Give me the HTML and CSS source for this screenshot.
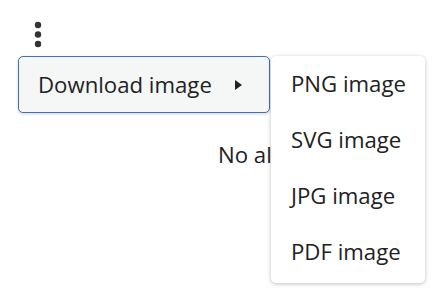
FILE: index.html
```html
<!DOCTYPE html>
<html>
<head>
<meta charset="utf-8">
<link rel="stylesheet" href="styles.css">
</head>
<body>
<div class="page">
  <div class="kebab">
    <svg width="8" height="27" viewBox="0 0 8 27">
      <circle cx="4" cy="4" r="3.2"/>
      <circle cx="4" cy="13.5" r="3.2"/>
      <circle cx="4" cy="23" r="3.2"/>
    </svg>
  </div>
  <div class="menu-row">
    <div class="menu-anchor">
      <div class="menu-item active">
        <span>Download image</span>
        <span class="caret"></span>
      </div>
      <ul class="submenu">
        <li>PNG image</li>
        <li>SVG image</li>
        <li>JPG image</li>
        <li>PDF image</li>
      </ul>
    </div>
  </div>
  <div class="empty"><span class="empty-text">No alerts found</span></div>
</div>
</body>
</html>
```
FILE: styles.css
```css
html, body {
  margin: 0;
  padding: 0;
  background: #ffffff;
}
body {
  font-family: "Open Sans", "Noto Sans", sans-serif;
  color: #222222;
  width: 434px;
  height: 302px;
  overflow: hidden;
}
.page {
  padding: 21px 0 0 18px;
}
.kebab {
  padding-left: 16px;
  height: 35px;
}
.kebab svg {
  display: block;
  fill: #333333;
}
.menu-row {
  display: flex;
}
.menu-anchor {
  position: relative;
}
.menu-item {
  box-sizing: border-box;
  width: 252px;
  height: 57px;
  display: flex;
  align-items: center;
  padding: 0 27px 0 19px;
  font-size: 22.2px;
  line-height: 30px;
  border: 1px solid transparent;
  border-radius: 5px;
}
.menu-item.active {
  background: #f5f6f6;
  border-color: #3d74b6;
  box-shadow: 0 1px 3px rgba(0, 0, 0, 0.18);
}
.caret {
  margin-left: auto;
  width: 0;
  height: 0;
  border-top: 5.5px solid transparent;
  border-bottom: 5.5px solid transparent;
  border-left: 7px solid #222222;
}
.submenu {
  position: absolute;
  left: 253px;
  top: 0;
  width: 154px;
  margin: 0;
  padding: 0 0 3px 0;
  list-style: none;
  background: #ffffff;
  border-radius: 5px;
  box-shadow: 0 1px 4px rgba(0, 0, 0, 0.25);
  z-index: 2;
}
.submenu li {
  height: 56px;
  display: flex;
  align-items: center;
  padding-left: 20px;
  font-size: 22.2px;
  line-height: 30px;
}
.empty {
  margin-top: 27px;
  margin-left: 200px;
  width: 53px;
  overflow: hidden;
  font-size: 22.2px;
  line-height: 30px;
  white-space: nowrap;
}
```
